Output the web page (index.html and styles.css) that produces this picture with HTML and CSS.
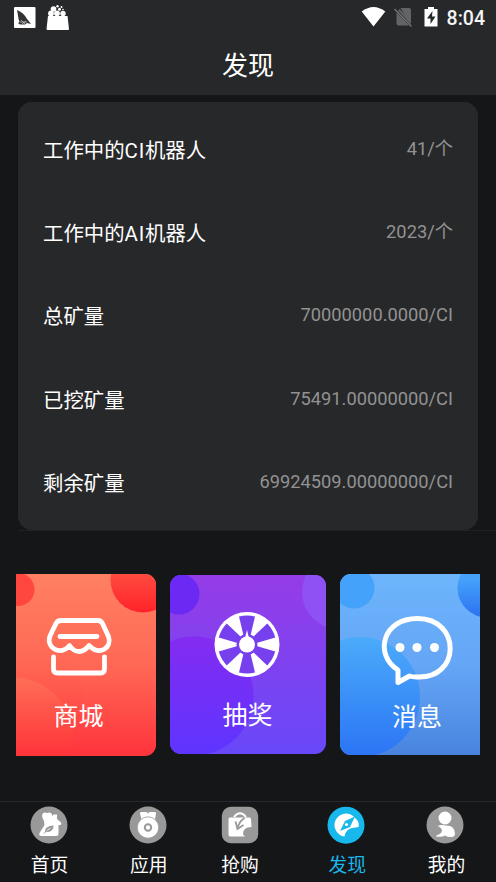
FILE: index.html
```html
<!DOCTYPE html>
<html lang="zh-CN">
<head>
<meta charset="utf-8">
<title>发现</title>
<link rel="stylesheet" href="styles.css">
</head>
<body>
<div class="app">
  <header class="header">
    <div class="status">
      <svg class="status-left" width="58" height="28" viewBox="0 0 58 28">
        <rect x="0" y="4" width="21.500" height="21" rx="1" fill="#fff"/>
        <path d="M3 7c5 2 8 5 10 9l4 5-4-1-2 1.500-5 0-2-1.500 1.500-1C4 15 4 11 3 7z" fill="#303234"/>
        <path d="M6 19h7M8 21l4-3M7 17l4 4" stroke="#ccc" stroke-width=".7"/>
        <path d="M34 13h19.500l1.500 13q0 1-1 1H33.500q-1 0-1-1z" fill="#fff"/>
        <circle cx="37" cy="10.500" r="2.900" fill="#fff"/><circle cx="43" cy="10.300" r="2.900" fill="#fff"/><circle cx="49" cy="10.500" r="2.700" fill="#fff"/><circle cx="39.500" cy="6" r="2.800" fill="#fff"/><circle cx="45.500" cy="6.300" r="1.500" fill="#fff"/><circle cx="43.500" cy="3.200" r="1.200" fill="#fff"/><circle cx="47.500" cy="4" r="1" fill="#fff"/><circle cx="49" cy="6.500" r=".8" fill="#fff"/>
      </svg>
      <div class="status-right">
        <svg width="80" height="24" viewBox="0 0 80 24">
          <path d="M12.500 22.500L.7 7.500Q12.500-1.500 24.300 7.500z" fill="#fff"/>
          <path d="M39.500 4H48q2 0 2 2v15zM35.500 8.500L48 21.500H37.500q-2 0-2-2z" fill="#636466"/>
          <path d="M36.500 7.500l2-2.500L49 16v5z" fill="#636466"/>
          <path d="M34.500 5l16.500 17.500" stroke="#27282a" stroke-width="1.500"/>
          <path d="M33.500 5l17 17.500" stroke="#727375" stroke-width="1.500"/>
          <path d="M67 3h6v2h3.500v17.500h-13V5H67z" fill="#fff"/>
          <path d="M71.500 7l-5.500 7.500h3.500v5.500l5-7.500h-3.500z" fill="#27282a"/>
        </svg>
        <span class="time">8:04</span>
      </div>
    </div>
    <h1 class="title">发现</h1>
  </header>
  <main class="content">
    <section class="stats">
      <div class="row"><span class="label">工作中的<span class="latin">CI</span>机器人</span><span class="value">41/个</span></div>
      <div class="row"><span class="label">工作中的<span class="latin">AI</span>机器人</span><span class="value">2023/个</span></div>
      <div class="row"><span class="label">总矿量</span><span class="value">70000000.0000/CI</span></div>
      <div class="row"><span class="label">已挖矿量</span><span class="value">75491.00000000/CI</span></div>
      <div class="row"><span class="label">剩余矿量</span><span class="value">69924509.00000000/CI</span></div>
    </section>
    <section class="cards">
      <div class="card shop">
        <svg class="art" viewBox="0 0 140 182" preserveAspectRatio="none">
          <defs>
            <linearGradient id="ra" x2="0" y2="1"><stop stop-color="#ff8062"/><stop offset=".5" stop-color="#ff6855"/><stop offset="1" stop-color="#ff343c"/></linearGradient>
            <linearGradient id="rb" x2="0" y2="1"><stop stop-color="#ff6650"/><stop offset="1" stop-color="#ff2329"/></linearGradient>
            <linearGradient id="rc" x2="0" y2="1"><stop stop-color="#ff6e57"/><stop offset=".65" stop-color="#ff3339"/></linearGradient>
            <linearGradient id="rd" x2="0" y2="1"><stop stop-color="#ff7058" stop-opacity="0"/><stop offset="1" stop-color="#ff3038" stop-opacity=".8"/></linearGradient>
          </defs>
          <path d="M0 0h140v182H0z" fill="url(#ra)"/>
          <circle cx="2" cy="15.500" r="16.500" fill="#ff473f"/>
          <circle cx="127" cy="6" r="32.500" fill="url(#rb)"/>
          <circle cx="8" cy="126" r="60" fill="url(#rd)"/>
          <circle cx="-3" cy="164" r="60.500" fill="url(#rc)"/>
          <g fill="none" stroke="#fff" stroke-width="4.800" stroke-linecap="round" stroke-linejoin="round">
            <path d="M45 46.500h37q3 0 4.500 3l6 13c4 11-9 20-19.500 9-6 8-14 8-19.500 0-9 11-23 2-20-8 1-3 5-11 6.500-14q1.500-3 5-3z"/>
            <path d="M44 62.500h37"/>
            <path d="M37.500 83v12q0 4 4 4h43q4 0 4-4V83"/>
          </g>
        </svg>
        <span class="card-name">商城</span>
      </div>
      <div class="card lottery">
        <svg class="art" viewBox="0 0 156 179">
          <defs>
            <linearGradient id="pa" x2="0" y2="1"><stop stop-color="#953ce7"/><stop offset="1" stop-color="#6848f9"/></linearGradient>
            <linearGradient id="pb" x2="0" y2="1"><stop stop-color="#842bf1"/><stop offset="1" stop-color="#5d35ff"/></linearGradient>
          </defs>
          <path d="M0 0h156v179H0z" fill="url(#pa)"/>
          <circle cx="9" cy="19" r="20.500" fill="#6c29f4"/>
          <circle cx="169" cy="17" r="37" fill="#8f50f4"/>
          <circle cx="24" cy="121" r="59.500" fill="url(#pb)"/>
          <circle cx="77" cy="69.500" r="32.500" fill="#fff"/>
          <g fill="#7740ef">
            <path id="slot" d="M69 41.500q8-2 16 0l-4.500 19h-7z"/>
            <use href="#slot" transform="rotate(60 77 69.500)"/><use href="#slot" transform="rotate(120 77 69.500)"/><use href="#slot" transform="rotate(180 77 69.500)"/><use href="#slot" transform="rotate(240 77 69.500)"/><use href="#slot" transform="rotate(300 77 69.500)"/>
            <circle cx="77" cy="69.500" r="10.500"/>
          </g>
          <circle cx="77" cy="69.500" r="8" fill="#fff"/><path d="M75 63l2-8 2 8z" fill="#fff"/>
        </svg>
        <span class="card-name">抽奖</span>
      </div>
      <div class="card message">
        <svg class="art" viewBox="0 0 140 181">
          <defs>
            <linearGradient id="ba" x2="0" y2="1"><stop stop-color="#6cb5fb"/><stop offset=".5" stop-color="#65a6f6"/><stop offset="1" stop-color="#4884df"/></linearGradient>
            <linearGradient id="bb" x2="0" y2="1"><stop stop-color="#4babfa"/><stop offset="1" stop-color="#2b74f5"/></linearGradient>
            <linearGradient id="bc" x2="0" y2="1"><stop offset=".35" stop-color="#45a1fa"/><stop offset="1" stop-color="#2b71f1"/></linearGradient>
          </defs>
          <path d="M0 0h140v181H0z" fill="url(#ba)"/>
          <circle cx="14" cy="14" r="20.500" fill="#45a2fa"/>
          <circle cx="147" cy="14" r="29.500" fill="url(#bc)"/>
          <circle cx="20" cy="123" r="60" fill="url(#bb)"/>
          <path d="M58 96C34 81 42 44.500 77.500 44.500c44 0 43.500 61-1 58.500q-4 0-7-1L58 108.500z" fill="none" stroke="#fff" stroke-width="5" stroke-linejoin="round"/>
          <g fill="#fff"><circle cx="60" cy="73.500" r="4.500"/><circle cx="77" cy="73.500" r="4.500"/><circle cx="94.500" cy="73.500" r="4.500"/></g>
        </svg>
        <span class="card-name">消息</span>
      </div>
    </section>
  </main>
  <nav class="tabs">
    <div class="tab">
      <svg width="38" height="38" viewBox="0 0 38 38"><circle cx="19" cy="19" r="18.500" fill="#999"/><path d="M12.500 12q-1.500-4.500 2-5.500l2.500.500 3-.500q2 .500 2.500 3.500l1-1.500H27v4.500l4 3.500q1 2-1 2.500h-1.500v8.500q0 2.500-2.500 2.500H11.500q-3 0-2-3l5-8-.500-4z" fill="#fff"/><path d="M15 26q-.500-6 8.500-6.500 0 6.500-6 6.500z" fill="#999"/><path d="M14 27.500l2-2" stroke="#999"/><path d="M16.500 25l4-3" stroke="#fff" stroke-width=".8"/></svg>
      <span>首页</span>
    </div>
    <div class="tab">
      <svg width="38" height="38" viewBox="0 0 38 38"><circle cx="19" cy="19" r="18.500" fill="#999"/><path d="M12 6h5.500l1.500 1.500L20.500 6H26q1 0 1 1.500l-1 6H12.500l-1.500-6Q11 6 12 6z" fill="#fff"/><circle cx="19" cy="21.500" r="10.700" fill="#fff" stroke="#999" stroke-width=".8"/><circle cx="19" cy="21.500" r="3.200" fill="none" stroke="#999" stroke-width="2"/></svg>
      <span>应用</span>
    </div>
    <div class="tab buy">
      <svg width="38" height="38" viewBox="0 0 38 38"><rect x=".8" y=".8" width="36.400" height="36.400" rx="9" fill="#999"/><path d="M9 11.500h19.500q1.500 0 1.500 1.500l.5 8q-9 0-8.500 7.500l2 2H9q-1.500 0-1.500-2V13q0-1.500 1.500-1.500z" fill="#fff"/><path d="M13 11q6-7.500 12 0" fill="none" stroke="#fff" stroke-width="2"/><path d="M14.500 15.500l2 7.500 6-4M16.500 23q1-7 7-11" fill="none" stroke="#999" stroke-width="1.800"/></svg>
      <span>抢购</span>
    </div>
    <div class="tab active">
      <svg width="38" height="38" viewBox="0 0 38 38"><circle cx="19" cy="19.200" r="18.500" fill="#19b8ec"/><path d="M26 10A11.500 11.500 0 1 0 17.500 30.500q1-8.500 11-9l3-.500q1-4-1.500-7z" fill="#fff"/><path d="M28 10.500L18 15l-5 10 10-4z" fill="#19b8ec"/><circle cx="19.500" cy="18.500" r="1.600" fill="#fff"/></svg>
      <span>发现</span>
    </div>
    <div class="tab">
      <svg width="38" height="38" viewBox="0 0 38 38"><circle cx="19" cy="19" r="18.500" fill="#999"/><circle cx="19" cy="12" r="6.500" fill="#fff"/><path d="M11.500 20q4-1.500 8-.500 9-.500 9.500 8 0 3.500-4 3.500-4 0-6-1.500-3 2-9 1-.500-1 1.500-1.500 4-1.500 4.500-4.500-.500-3-4.500-4.500z" fill="#fff"/></svg>
      <span>我的</span>
    </div>
  </nav>
</div>
</body>
</html>
```
FILE: styles.css
```css
* { box-sizing: border-box; }
body { margin: 0; background: #151618; color: #fff; font-family: Roboto, "Noto Sans CJK SC", sans-serif; }
.app { width: 496px; height: 882px; display: flex; flex-direction: column; overflow: hidden; }
svg { display: block; flex: none; }
.header { height: 95px; flex: none; background: #27282a; }
.status { height: 35px; padding: 4px 11px 0 14px; display: flex; justify-content: space-between; align-items: flex-start; }
.status-left { margin-top: -1px; }
.status-right { display: flex; gap: 6px; }
.time { font-size: 19.500px; line-height: 29px; font-weight: 500; color: #f4f4f4; }
.title { margin: 12px 0 0; font-size: 26px; line-height: 38px; font-weight: 400; text-align: center; }
.content { flex: 1; min-height: 0; padding-top: 7px; }
.stats { margin: 0 18px; height: 428px; padding: 7px 25px 0; border-radius: 14px; background: #27282a; }
.row { height: 83.400px; display: flex; justify-content: space-between; align-items: center; }
.label { font-size: 20.400px; line-height: 30px; }
.latin { letter-spacing: .8px; }
.value { font-size: 18.300px; line-height: 30px; color: #929292; margin-bottom: 4px; }
.cards { display: flex; align-items: flex-start; margin-left: 18px; border-top: 1px solid #20222a; padding: 42.500px 16px 0 0; gap: 14px; }
.card { position: relative; flex: none; overflow: hidden; text-align: center; }
.art { position: absolute; inset: 0; width: 100%; height: 100%; }
.card-name { position: relative; display: block; font-size: 25px; line-height: 36px; font-weight: 400; }
.shop { width: 140px; height: 182px; margin-left: -2px; padding: 125px 15px 0 0; border-radius: 0 11px 11px 0; }
.lottery { width: 156px; height: 179px; margin-top: 1px; padding: 123px 1px 0 0; border-radius: 11px; }
.message { width: 140px; height: 181px; padding: 126.500px 0 0 14px; border-radius: 11px 0 0 11px; }
.tabs { height: 81px; flex: none; border-top: 1px solid #282930; display: flex; }
.tab { flex: 1; padding: 4px 2px 0 0; display: flex; flex-direction: column; align-items: center; font-size: 18.800px; }
.tab span { line-height: 28px; margin: 8px -1px 0 1px; }
.buy { transform: translateX(-7px); }
.buy span { margin: 8px 0 0; }
.active { color: #19b8ec; }
```
